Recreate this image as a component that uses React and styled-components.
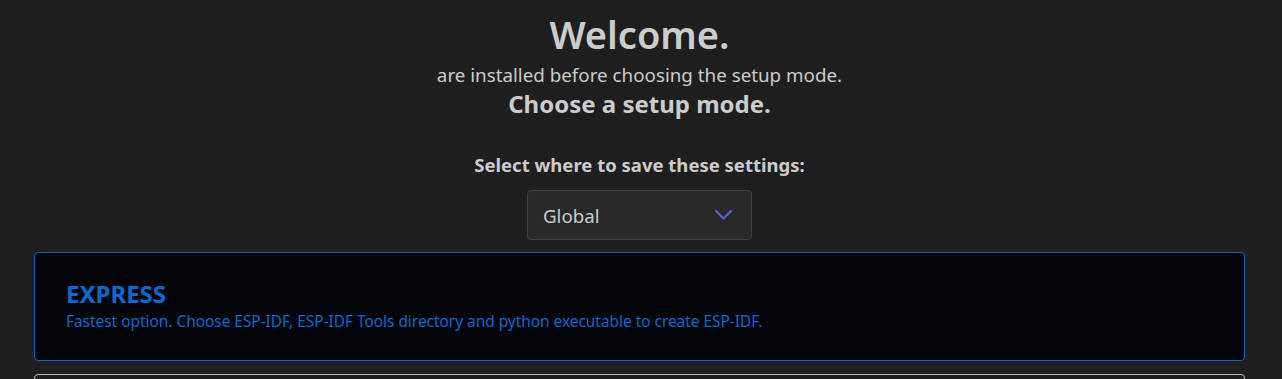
import React from "react";
import styled, { createGlobalStyle } from "styled-components";

const Global = createGlobalStyle`
  html, body {
    margin: 0;
    padding: 0;
    background: #1f1f1f;
    color: #cccccc;
    font-family: "Noto Sans", "Open Sans", sans-serif;
    overflow: hidden;
  }
`;

const Page = styled.div`
  display: flex;
  flex-direction: column;
  align-items: center;
  padding: 10px 37px 0 34px;
`;

const Title = styled.h1`
  margin: 0;
  font-size: 38px;
  font-weight: 600;
  line-height: 48px;
  color: #cccccc;
`;

const Subtitle = styled.p`
  margin: 5px 0 0 0;
  font-size: 18.8px;
  line-height: 24px;
  color: #cccccc;
`;

const Heading = styled.h2`
  margin: 2px 0 0 0;
  font-size: 24px;
  font-weight: 700;
  line-height: 30px;
  color: #cccccc;
`;

const Label = styled.label`
  margin: 34px 0 0 0;
  font-size: 18.5px;
  font-weight: 700;
  line-height: 24px;
  color: #cccccc;
`;

const SelectBox = styled.div`
  margin-top: 13px;
  width: 225px;
  height: 50px;
  box-sizing: border-box;
  display: flex;
  align-items: center;
  justify-content: space-between;
  padding: 0 18px 0 15px;
  background: #292929;
  border: 1px solid #424242;
  border-radius: 4px;
  font-size: 18.7px;
  color: #cccccc;
`;

const Card = styled.div`
  align-self: stretch;
  margin-top: ${(p) => p.$mt}px;
  box-sizing: border-box;
  height: 109px;
  flex-shrink: 0;
  padding: 26px 31px 28px 31px;
  border: 1px solid ${(p) => (p.$active ? "#0a66c2" : "#bdbdbd")};
  border-radius: 4px;
  background: ${(p) => (p.$active ? "#02040a" : "#1f1f1f")};
  color: ${(p) => (p.$active ? "#0a6ad0" : "#cccccc")};
`;

const CardTitle = styled.div`
  font-size: 24px;
  font-weight: 700;
  line-height: 30px;
`;

const CardText = styled.div`
  margin-top: 3px;
  font-size: 15.4px;
  line-height: 20px;
`;

const Chevron = () => (
  <svg width="19" height="12" viewBox="0 0 19 12" fill="none">
    <path d="M2 2 L9.5 9.5 L17 2" stroke="#5565d8" strokeWidth="2.2" strokeLinecap="round" strokeLinejoin="round" />
  </svg>
);

export default function App() {
  return (
    <>
      <Global />
      <Page>
        <Title>Welcome.</Title>
        <Subtitle>are installed before choosing the setup mode.</Subtitle>
        <Heading>Choose a setup mode.</Heading>
        <Label>Select where to save these settings:</Label>
        <SelectBox>
          <span>Global</span>
          <Chevron />
        </SelectBox>
        <Card $active $mt={12}>
          <CardTitle>EXPRESS</CardTitle>
          <CardText>
            Fastest option. Choose ESP-IDF, ESP-IDF Tools directory and python executable to create ESP-IDF.
          </CardText>
        </Card>
        <Card $mt={13} />
      </Page>
    </>
  );
}
